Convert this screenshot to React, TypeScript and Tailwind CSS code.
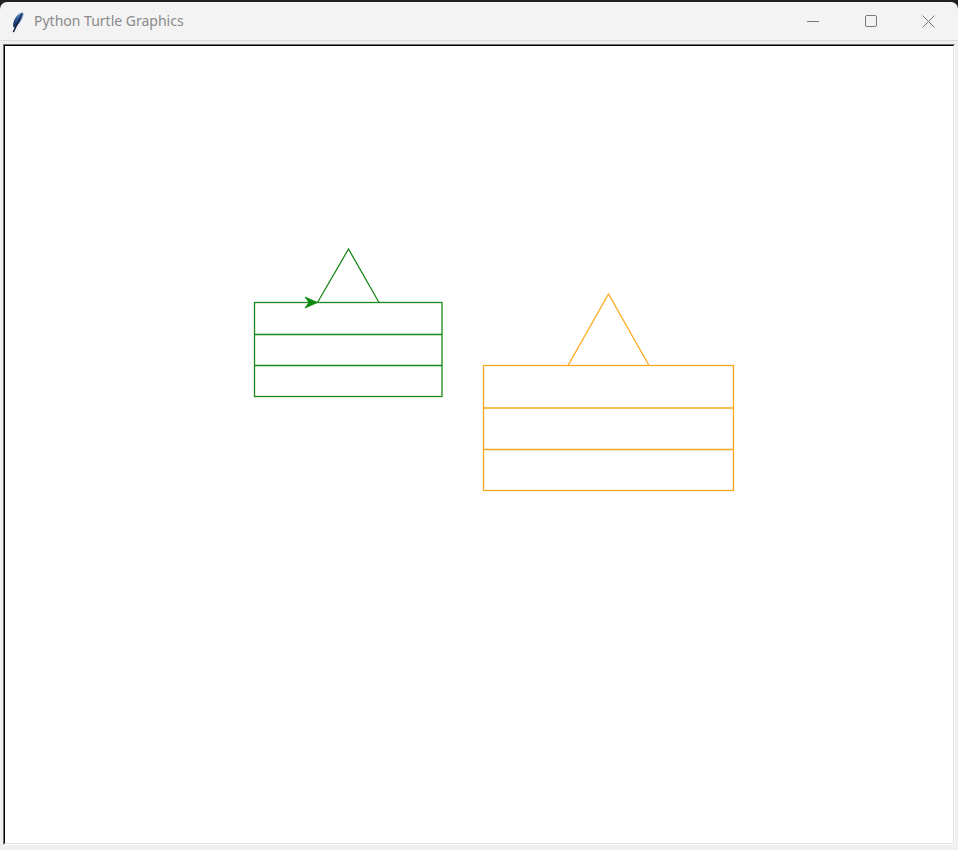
import React from "react";

function Feather() {
  return (
    <svg width="14" height="22" viewBox="0 0 14 22">
      <defs>
        <linearGradient id="fg" x1="0" y1="1" x2="1" y2="0">
          <stop offset="0" stopColor="#16233f" />
          <stop offset="0.55" stopColor="#2f62a8" />
          <stop offset="1" stopColor="#9cc3ee" />
        </linearGradient>
      </defs>
      <path d="M12 1 C 6.5 2.5, 2.5 8, 2 14.5 L 3 17 C 7.5 14, 11 9, 12.8 3.5 Z" fill="url(#fg)" />
      <path d="M10.8 3 L 2.6 20.5" stroke="#16233f" strokeWidth="1.6" strokeLinecap="round" />
    </svg>
  );
}

export default function App() {
  const green = "#1b881b";
  const orange = "#fba81c";
  return (
    <div className="w-[958px] h-[850px] flex flex-col bg-[#202124] overflow-hidden">
      <div className="h-[2px] shrink-0" />
      <div className="flex-1 flex flex-col bg-[#f3f3f3] rounded-t-[7px] overflow-hidden">
        <div className="h-[38px] shrink-0 flex items-center">
          <div className="pl-[11px] w-[34px] flex items-center pt-[1px]">
            <Feather />
          </div>
          <div
            className="text-[14px] text-[#8a8a8a] leading-none pb-[1px]"
            style={{ fontFamily: '"Segoe UI", "Noto Sans", "Liberation Sans", sans-serif' }}
          >
            Python Turtle Graphics
          </div>
          <div className="flex-1" />
          <div className="w-[58px] h-full flex items-center justify-center">
            <svg width="12" height="12" viewBox="0 0 12 12">
              <path d="M0 6.5 H12" stroke="#7a7a7a" strokeWidth="1" />
            </svg>
          </div>
          <div className="w-[58px] h-full flex items-center justify-center">
            <svg width="12" height="12" viewBox="0 0 12 12">
              <rect x="0.5" y="0.5" width="11" height="11" rx="1.5" fill="none" stroke="#7a7a7a" strokeWidth="1" />
            </svg>
          </div>
          <div className="w-[58px] h-full flex items-center justify-center pr-[1px]">
            <svg width="13" height="13" viewBox="0 0 13 13">
              <path d="M0.5 0.5 L12.5 12.5 M12.5 0.5 L0.5 12.5" stroke="#7a7a7a" strokeWidth="1" />
            </svg>
          </div>
        </div>
        <div className="h-[1px] bg-[#dcdcdc] shrink-0" />
        <div className="flex-1 flex flex-col bg-[#f0f0f0] px-[3px] pt-[3px] pb-[5px]">
          <div className="flex-1 flex flex-col border-t border-l border-b border-r border-t-[#6e6e6e] border-l-[#6e6e6e] border-b-white border-r-white">
            <div className="flex-1 flex flex-col border-t border-l border-b border-r border-t-black border-l-black border-b-[#e3e3e3] border-r-[#e3e3e3] bg-white">
              <svg width="948" height="797" viewBox="5 46 948 797" className="block">
                <g fill="none" stroke={green} strokeWidth="1.3">
                  <rect x="254.5" y="302.5" width="187.5" height="94" />
                  <path d="M254.5 334.5 H442 M254.5 365.5 H442" />
                  <path d="M317.5 302.5 L348.5 249 L379 302.5" />
                </g>
                <path d="M317.5 302.5 L305 297 L309 302.5 L305 308 Z" fill="#0a8a0a" stroke="#0a8a0a" strokeWidth="0.8" />
                <g fill="none" stroke={orange} strokeWidth="1.3">
                  <rect x="483.5" y="365.5" width="250" height="125" />
                  <path d="M483.5 408 H733.5 M483.5 449.5 H733.5" />
                  <path d="M568 365.5 L608.5 294 L649 365.5" />
                </g>
              </svg>
            </div>
          </div>
        </div>
      </div>
    </div>
  );
}
